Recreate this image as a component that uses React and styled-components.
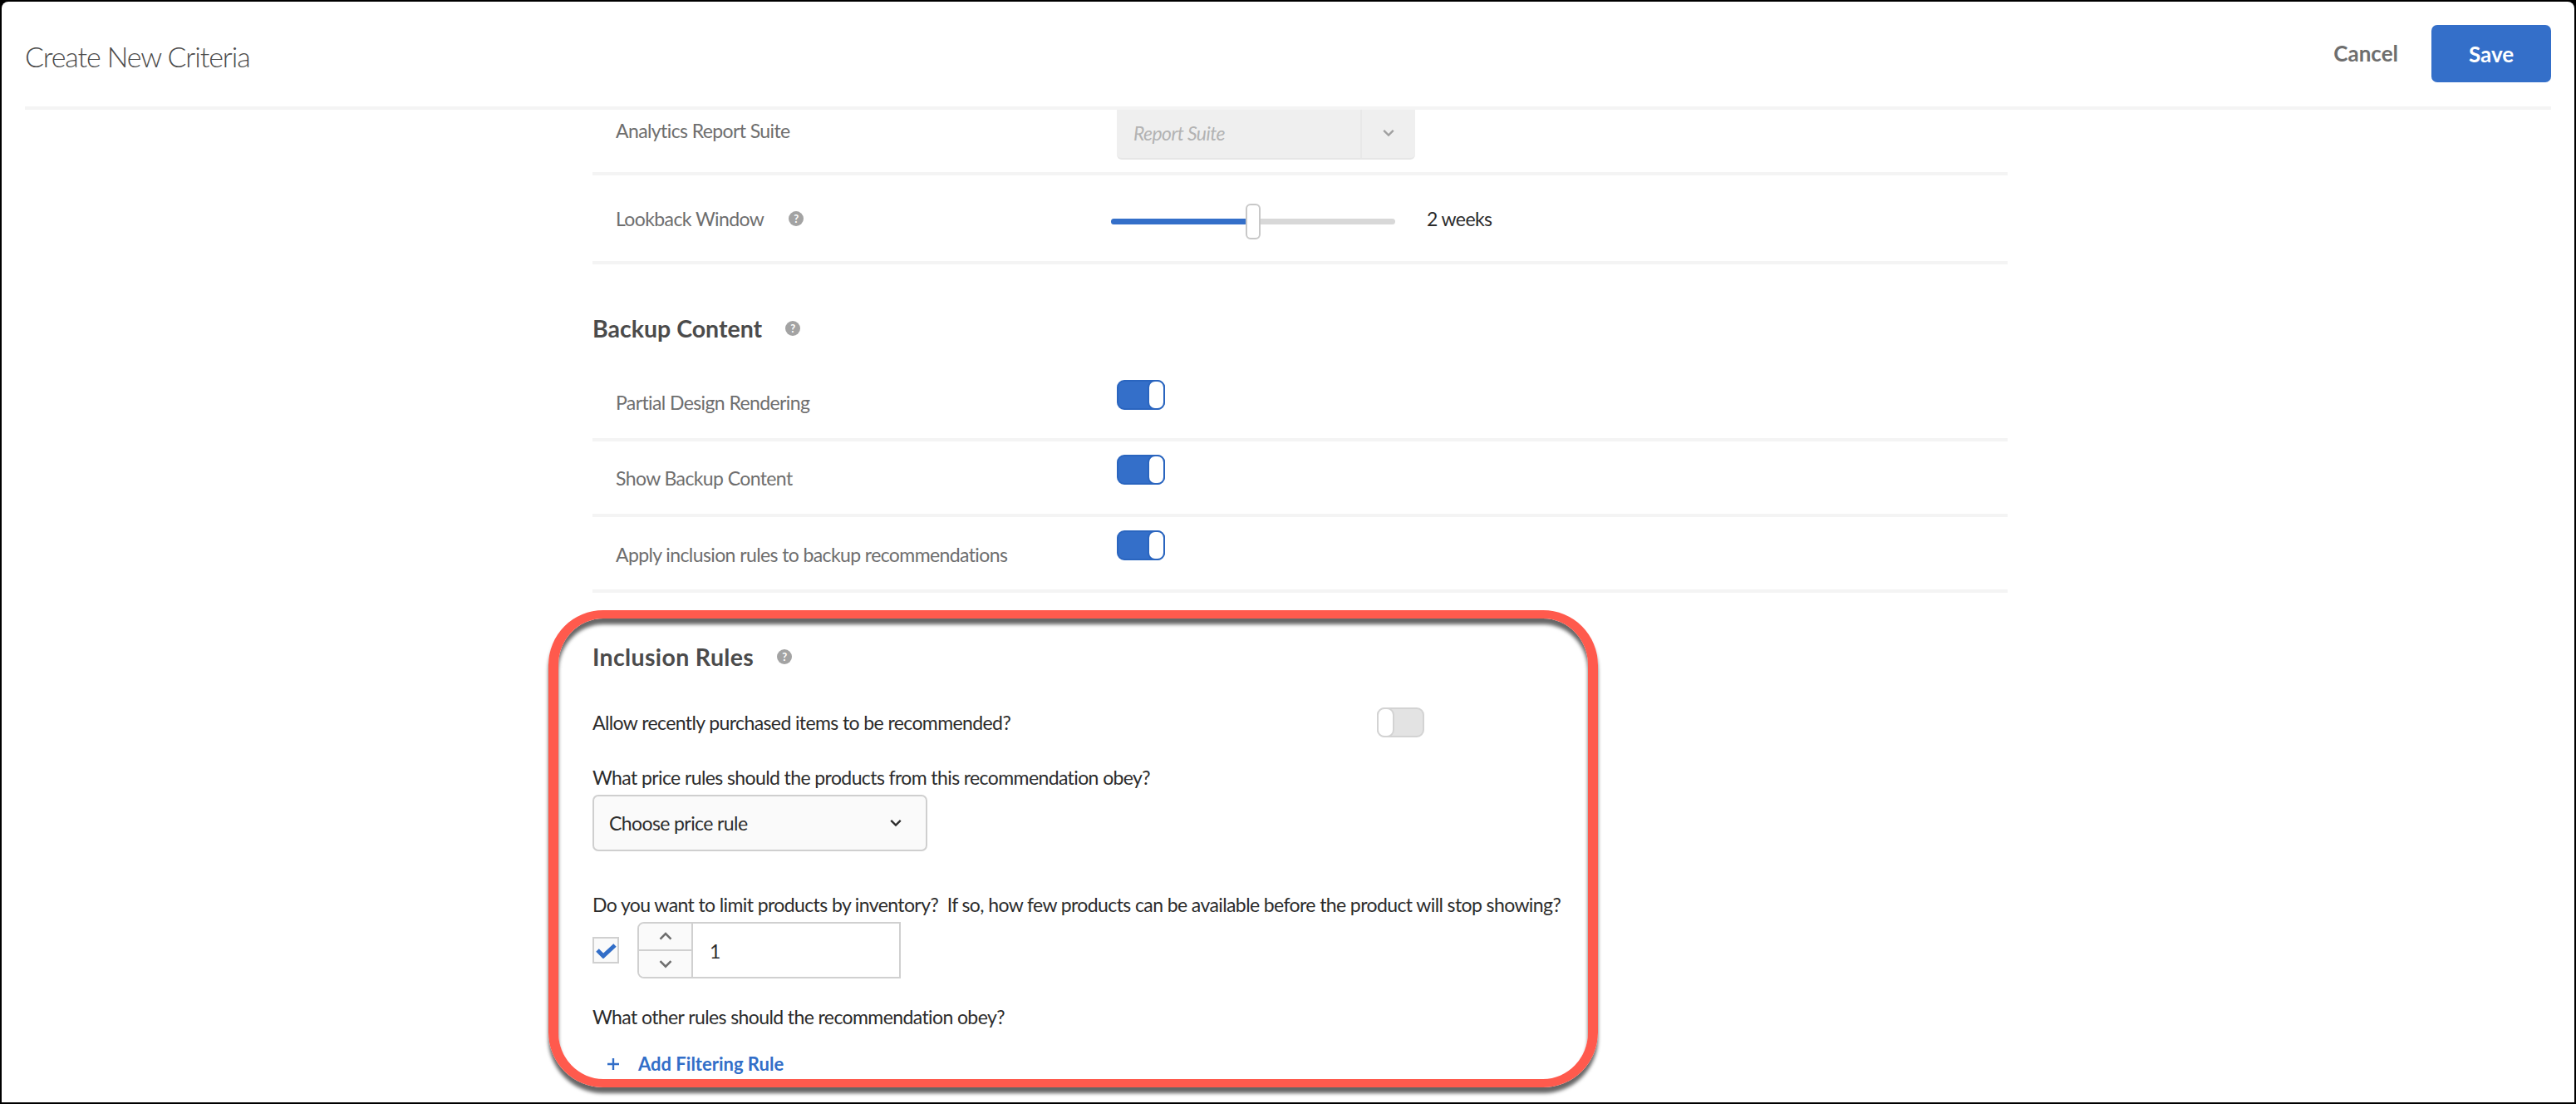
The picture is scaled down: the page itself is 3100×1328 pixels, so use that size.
import styled, { createGlobalStyle } from 'styled-components';

const GlobalStyle = createGlobalStyle`
  html, body {
    margin: 0;
    padding: 0;
    background: #000;
  }
  * {
    box-sizing: border-box;
  }
`

const Frame = styled.div`
  width: 3100px;
  height: 1328px;
  padding: 2px;
  background: #000;
  font-family: "Lato", "Liberation Sans", sans-serif;
`

const Panel = styled.div`
  position: relative;
  height: 100%;
  display: flex;
  flex-direction: column;
  background: #fff;
  border-radius: 8px 8px 0 0;
  overflow: hidden;
`

const Header = styled.header`
  flex: none;
  height: 130px;
  margin: 0 28px;
  display: flex;
  align-items: flex-start;
  justify-content: space-between;
  border-bottom: 4px solid #f4f4f4;
`

const Title = styled.h1`
  margin: 42px 0 0;
  font-size: 34px;
  line-height: 48px;
  font-weight: 300;
  letter-spacing: -1.1px;
  color: #4b4b4b;
`

const Actions = styled.div`
  display: flex;
  align-items: center;
  gap: 40px;
  margin-top: 28px;
`

const Cancel = styled.button`
  border: 0;
  padding: 0;
  background: none;
  font: 700 26px/69px "Lato", sans-serif;
  color: #6e6e6e;
`

const Save = styled.button`
  width: 144px;
  height: 69px;
  border: 0;
  border-radius: 7px;
  background: #346fc9;
  color: #fff;
  font: 700 26px/69px "Lato", sans-serif;
`

const Content = styled.main`
  flex: 1;
  overflow: hidden;
  padding-left: 711px;
  width: 2414px;
  font-size: 23px;
  letter-spacing: -0.6px;
`

const Row = styled.div`
  display: grid;
  grid-template-columns: 603px 1fr;
  align-items: ${(p) => (p.$top ? 'start' : 'center')};
  height: ${(p) => p.$height}px;
  padding-left: 28px;
  border-bottom: 4px solid #f4f4f4;
`

const RowLabel = styled.div`
  display: flex;
  align-items: center;
  gap: 30px;
  line-height: 30px;
  color: #6e6e6e;
  margin-top: ${(p) => p.$offset || 0}px;
`

const HelpDot = styled.span`
  flex: none;
  width: 18px;
  height: 18px;
  border-radius: 50%;
  background: #a3a3a3;
  color: #fff;
  font: 700 13px/18px "Lato", sans-serif;
  letter-spacing: 0;
  text-align: center;
`

const DisabledSelect = styled.div`
  width: 359px;
  height: 68px;
  margin-top: -24px;
  display: flex;
  background: #efefef;
  border-radius: 0 0 6px 6px;
  border-bottom: 2px solid #e6e6e6;
`

const DisabledValue = styled.span`
  flex: 1;
  padding-left: 20px;
  line-height: 72px;
  font-style: italic;
  color: #b3b3b3;
`

const DisabledArrow = styled.span`
  flex: none;
  width: 66px;
  display: flex;
  align-items: center;
  justify-content: center;
  padding-top: 6px;
  border-left: 2px solid #e8e8e8;
`

const SliderWrap = styled.div`
  display: flex;
  align-items: center;
  margin-left: -7px;
`

const SliderTrack = styled.div`
  position: relative;
  width: 342px;
  height: 7px;
  margin-top: 7px;
  border-radius: 4px;
  background: #d8d8d8;
`

const SliderFill = styled.div`
  height: 100%;
  border-radius: 4px 0 0 4px;
  background: #346fc9;
`

const SliderThumb = styled.div`
  position: absolute;
  top: -18px;
  left: 162px;
  width: 18px;
  height: 43px;
  background: #fff;
  border: 2px solid #c8c8c8;
  border-radius: 6px;
`

const SliderValue = styled.span`
  margin-left: 38px;
  color: #2c2c2c;
`

const SectionTitle = styled.h2`
  display: flex;
  align-items: center;
  gap: 28px;
  margin: ${(p) => p.$top}px 0 ${(p) => p.$bottom}px;
  font-size: 28.5px;
  line-height: 30px;
  font-weight: 700;
  letter-spacing: ${(p) => p.$tracking || 0}px;
  color: #4b4b4b;
`

const Toggle = styled.div`
  position: relative;
  width: ${(p) => (p.$on ? 58 : 57)}px;
  height: 36px;
  border-radius: 9px;
  border: 2px solid ${(p) => (p.$on ? '#2a65bf' : '#d3d3d3')};
  background: ${(p) => (p.$on ? '#346fc9' : '#e3e3e3')};
  margin-top: ${(p) => p.$offset || 0}px;
`

const ToggleKnob = styled.span`
  position: absolute;
  top: -2px;
  bottom: -2px;
  width: 21px;
  ${(p) => (p.$on ? 'right: -2px;' : 'left: -2px;')}
  background: #fff;
  border-radius: 9px;
  border: 2px solid ${(p) => (p.$on ? '#2a65bf' : '#d3d3d3')};
`

const Rules = styled.section`
  display: flex;
  flex-direction: column;
  align-items: flex-start;
`

const RuleToggleRow = styled.div`
  display: grid;
  grid-template-columns: 944px auto;
  align-items: center;
  margin-top: ${(p) => p.$top}px;
`

const RuleLabel = styled.div`
  line-height: 30px;
  white-space: pre;
  color: #2c2c2c;
  margin-top: ${(p) => p.$top || 0}px;
`

const PriceSelect = styled.div`
  width: 403px;
  height: 68px;
  margin-top: 6px;
  padding: 0 28px 0 18px;
  display: flex;
  align-items: center;
  justify-content: space-between;
  background: #fafafa;
  border: 2px solid #cfcfcf;
  border-radius: 7px;
  color: #2c2c2c;
`

const LimitRow = styled.div`
  display: flex;
  align-items: center;
  gap: 22px;
  margin-top: 6px;
`

const Checkbox = styled.div`
  width: 32px;
  height: 32px;
  display: flex;
  align-items: center;
  justify-content: center;
  background: #fafafa;
  border: 2px solid #d0d0d0;
`

const Stepper = styled.div`
  width: 317px;
  height: 68px;
  display: flex;
  border: 2px solid #d0d0d0;
  border-radius: 8px 0 0 8px;
`

const StepButtons = styled.div`
  flex: none;
  width: 65px;
  display: flex;
  flex-direction: column;
  background: #fafafa;
  border-right: 2px solid #d0d0d0;
  border-radius: 6px 0 0 6px;
`

const StepButton = styled.div`
  flex: 1;
  display: flex;
  align-items: center;
  justify-content: center;
  & + & {
    border-top: 2px solid #d0d0d0;
  }
`

const StepValue = styled.span`
  padding-left: 20px;
  line-height: 66px;
  color: #2c2c2c;
`

const AddRule = styled.button`
  display: flex;
  align-items: center;
  gap: 23px;
  margin-top: 27px;
  padding: 0 0 0 18px;
  border: 0;
  background: none;
  font: 700 22px/30px "Lato", sans-serif;
  color: #326ec8;
`

const Callout = styled.div`
  position: absolute;
  left: 658px;
  top: 732px;
  width: 1263px;
  height: 574px;
  border-style: solid;
  border-width: 10px 12px;
  border-color: #ff5a4d;
  border-radius: 66px;
  pointer-events: none;
  box-shadow: 0 7px 4px rgba(0, 0, 0, 0.6), inset 0 7px 4px rgba(0, 0, 0, 0.6);
`

const Chevron = ({ up, size = 18, color = '#6e6e6e', width = 2 }) => (
  <svg width={size} height={size * 0.6} viewBox="0 0 16 10" fill="none">
    <polyline
      points={up ? '2,8 8,2 14,8' : '2,2 8,8 14,2'}
      stroke={color}
      strokeWidth={width * 1.2}
    />
  </svg>
)

const Plus = () => (
  <svg width="14" height="14" viewBox="0 0 14 14">
    <path d="M7 0v14M0 7h14" stroke="#326ec8" strokeWidth="2.4" fill="none" />
  </svg>
)

const Check = () => (
  <svg width="25" height="19" viewBox="0 0 25 19" fill="none">
    <polyline points="2,9 9,16 23,3" stroke="#326ec8" strokeWidth="5" />
  </svg>
)

const SwitchControl = ({ on, offset }) => (
  <Toggle $on={on} $offset={offset}>
    <ToggleKnob $on={on} />
  </Toggle>
)

const App = () => {
  return (
    <Frame>
      <GlobalStyle />
      <Panel>
        <Header>
          <Title>Create New Criteria</Title>
          <Actions>
            <Cancel>Cancel</Cancel>
            <Save>Save</Save>
          </Actions>
        </Header>
        <Content>
          <Row $height={79}>
            <RowLabel $offset={-25}>Analytics Report Suite</RowLabel>
            <DisabledSelect>
              <DisabledValue>Report Suite</DisabledValue>
              <DisabledArrow>
                <Chevron size={16} color="#a0a0a0" />
              </DisabledArrow>
            </DisabledSelect>
          </Row>
          <Row $height={107}>
            <RowLabel>
              Lookback Window
              <HelpDot>?</HelpDot>
            </RowLabel>
            <SliderWrap>
              <SliderTrack>
                <SliderFill style={{ width: '48%' }} />
                <SliderThumb />
              </SliderTrack>
              <SliderValue>2 weeks</SliderValue>
            </SliderWrap>
          </Row>
          <SectionTitle $top={62} $bottom={30}>
            Backup Content
            <HelpDot>?</HelpDot>
          </SectionTitle>
          <Row $height={91} $top>
            <RowLabel $offset={29}>Partial Design Rendering</RowLabel>
            <SwitchControl on offset={17} />
          </Row>
          <Row $height={91} $top>
            <RowLabel $offset={29}>Show Backup Content</RowLabel>
            <SwitchControl on offset={16} />
          </Row>
          <Row $height={91} $top>
            <RowLabel $offset={30}>Apply inclusion rules to backup recommendations</RowLabel>
            <SwitchControl on offset={16} />
          </Row>
          <Rules>
            <SectionTitle $top={62} $bottom={0} $tracking={0.35}>
              Inclusion Rules
              <HelpDot>?</HelpDot>
            </SectionTitle>
            <RuleToggleRow $top={46}>
              <RuleLabel>Allow recently purchased items to be recommended?</RuleLabel>
              <SwitchControl />
            </RuleToggleRow>
            <RuleLabel $top={33}>What price rules should the products from this recommendation obey?</RuleLabel>
            <PriceSelect>
              Choose price rule
              <Chevron size={16} color="#2c2c2c" />
            </PriceSelect>
            <RuleLabel $top={49}>Do you want to limit products by inventory?  If so, how few products can be available before the product will stop showing?</RuleLabel>
            <LimitRow>
              <Checkbox>
                <Check />
              </Checkbox>
              <Stepper>
                <StepButtons>
                  <StepButton>
                    <Chevron up />
                  </StepButton>
                  <StepButton>
                    <Chevron />
                  </StepButton>
                </StepButtons>
                <StepValue>1</StepValue>
              </Stepper>
            </LimitRow>
            <RuleLabel $top={31}>What other rules should the recommendation obey?</RuleLabel>
            <AddRule>
              <Plus />
              Add Filtering Rule
            </AddRule>
          </Rules>
        </Content>
        <Callout />
      </Panel>
    </Frame>
  )
}

export default App
